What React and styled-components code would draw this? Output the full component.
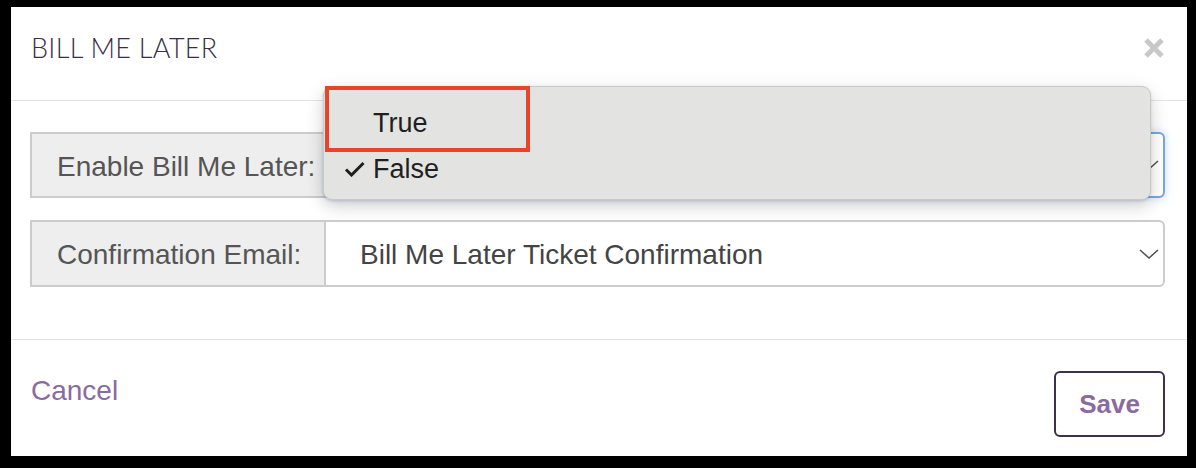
import React from "react";
import styled, { createGlobalStyle } from "styled-components";

const Global = createGlobalStyle`
  html, body { margin: 0; padding: 0; background: #000; }
  * { box-sizing: border-box; }
`;

const Frame = styled.div`
  width: 1196px;
  height: 468px;
  padding: 7px 9px 12px 11px;
  background: #000;
  display: flex;
  font-family: "Liberation Sans", Arial, sans-serif;
`;

const Panel = styled.div`
  flex: 1;
  background: #fff;
  display: flex;
  flex-direction: column;
`;

const Header = styled.div`
  height: 94px;
  border-bottom: 1px solid #e4e4e4;
  display: flex;
  justify-content: space-between;
  align-items: flex-start;
  padding: 0 22px 0 20px;
`;

const Title = styled.h1`
  margin: 26px 0 0;
  font-family: "Lato", "Liberation Sans", sans-serif;
  font-weight: 300;
  font-size: 27px;
  line-height: 30px;
  color: #3b2d48;
  letter-spacing: 0.3px;
`;

const Close = styled.button`
  margin-top: 30px;
  width: 22px;
  height: 22px;
  padding: 0;
  border: none;
  background: none;
  display: flex;
`;

const Body = styled.div`
  padding: 31px 22px 52px 19px;
  border-bottom: 1px solid #e4e4e4;
  display: flex;
  flex-direction: column;
  gap: 22px;
`;

const Row = styled.div`
  display: flex;
  height: ${(p) => p.$h || 66}px;
`;

const Label = styled.div`
  width: 296px;
  background: #eeeeee;
  border: 2px solid #cccccc;
  display: flex;
  align-items: center;
  padding: 3px 0 0 25px;
  font-size: 28px;
  color: #555;
`;

const Select = styled.div`
  position: relative;
  flex: 1;
  background: #fff;
  border: 2px solid ${(p) => (p.$focused ? "#7aa6de" : "#cccccc")};
  border-left: none;
  border-radius: 0 6px 6px 0;
  box-shadow: ${(p) => (p.$focused ? "0 0 10px rgba(102,160,230,0.35)" : "none")};
  display: flex;
  align-items: center;
  justify-content: space-between;
  padding: 3px 3px 0 34px;
  font-size: 28px;
  color: #444;
`;

const Value = styled.span`
  white-space: nowrap;
`;

const Chevron = styled.svg`
  width: 22px;
  height: 12px;
  margin-top: -3px;
`;

const Menu = styled.div`
  position: absolute;
  left: -3px;
  top: -48px;
  width: 828px;
  height: 114px;
  background: #e3e3e2;
  border: 1px solid #c9c9c9;
  border-radius: 9px;
  box-shadow: 0 6px 18px rgba(0, 0, 0, 0.18), 0 1px 3px rgba(0, 0, 0, 0.12);
  padding-top: 13px;
  z-index: 2;
`;

const Item = styled.div`
  position: relative;
  height: 46px;
  display: flex;
  align-items: center;
  padding-left: 49px;
  font-family: "Liberation Sans", "Helvetica", sans-serif;
  font-size: 27px;
  color: #1f1f1f;
`;

const Check = styled.svg`
  position: absolute;
  left: 20px;
  top: 15px;
  width: 21px;
  height: 16px;
`;

const Highlight = styled.div`
  position: absolute;
  left: 1px;
  top: -1px;
  width: 205px;
  height: 66px;
  border: 4px solid #e8432b;
`;

const Footer = styled.div`
  flex: 1;
  display: flex;
  justify-content: space-between;
  align-items: flex-start;
  padding: 31px 22px 0 20px;
`;

const Cancel = styled.a`
  margin-top: 4px;
  font-size: 28px;
  line-height: 32px;
  color: #8a6b9f;
  cursor: pointer;
`;

const SaveButton = styled.button`
  width: 111px;
  height: 66px;
  background: #fff;
  border: 2px solid #3e2f4a;
  border-radius: 6px;
  font-family: "Liberation Sans", Arial, sans-serif;
  font-weight: 700;
  font-size: 26px;
  color: #8a6b9f;
  padding: 0;
`;

const ChevronIcon = () => (
  <Chevron viewBox="0 0 22 12">
    <path d="M2 2 L11 10 L20 2" fill="none" stroke="#555" strokeWidth="1.6" />
  </Chevron>
);

export default function App() {
  return (
    <>
      <Global />
      <Frame>
        <Panel>
          <Header>
            <Title>BILL ME LATER</Title>
            <Close aria-label="Close">
              <svg width="22" height="22" viewBox="0 0 22 22">
                <path d="M3 3 L19 19 M19 3 L3 19" stroke="#c8c8c8" strokeWidth="5" strokeLinecap="butt" />
              </svg>
            </Close>
          </Header>
          <Body>
            <Row>
              <Label>Enable Bill Me Later:</Label>
              <Select $focused>
                <Value />
                <ChevronIcon />
                <Menu>
                  <Highlight />
                  <Item>True</Item>
                  <Item>
                    <Check viewBox="0 0 21 16">
                      <path d="M2 8.5 L7.5 14 L19.5 2" fill="none" stroke="#1f1f1f" strokeWidth="3" />
                    </Check>
                    False
                  </Item>
                </Menu>
              </Select>
            </Row>
            <Row $h={67}>
              <Label>Confirmation Email:</Label>
              <Select>
                <Value>Bill Me Later Ticket Confirmation</Value>
                <ChevronIcon />
              </Select>
            </Row>
          </Body>
          <Footer>
            <Cancel>Cancel</Cancel>
            <SaveButton>Save</SaveButton>
          </Footer>
        </Panel>
      </Frame>
    </>
  );
}
